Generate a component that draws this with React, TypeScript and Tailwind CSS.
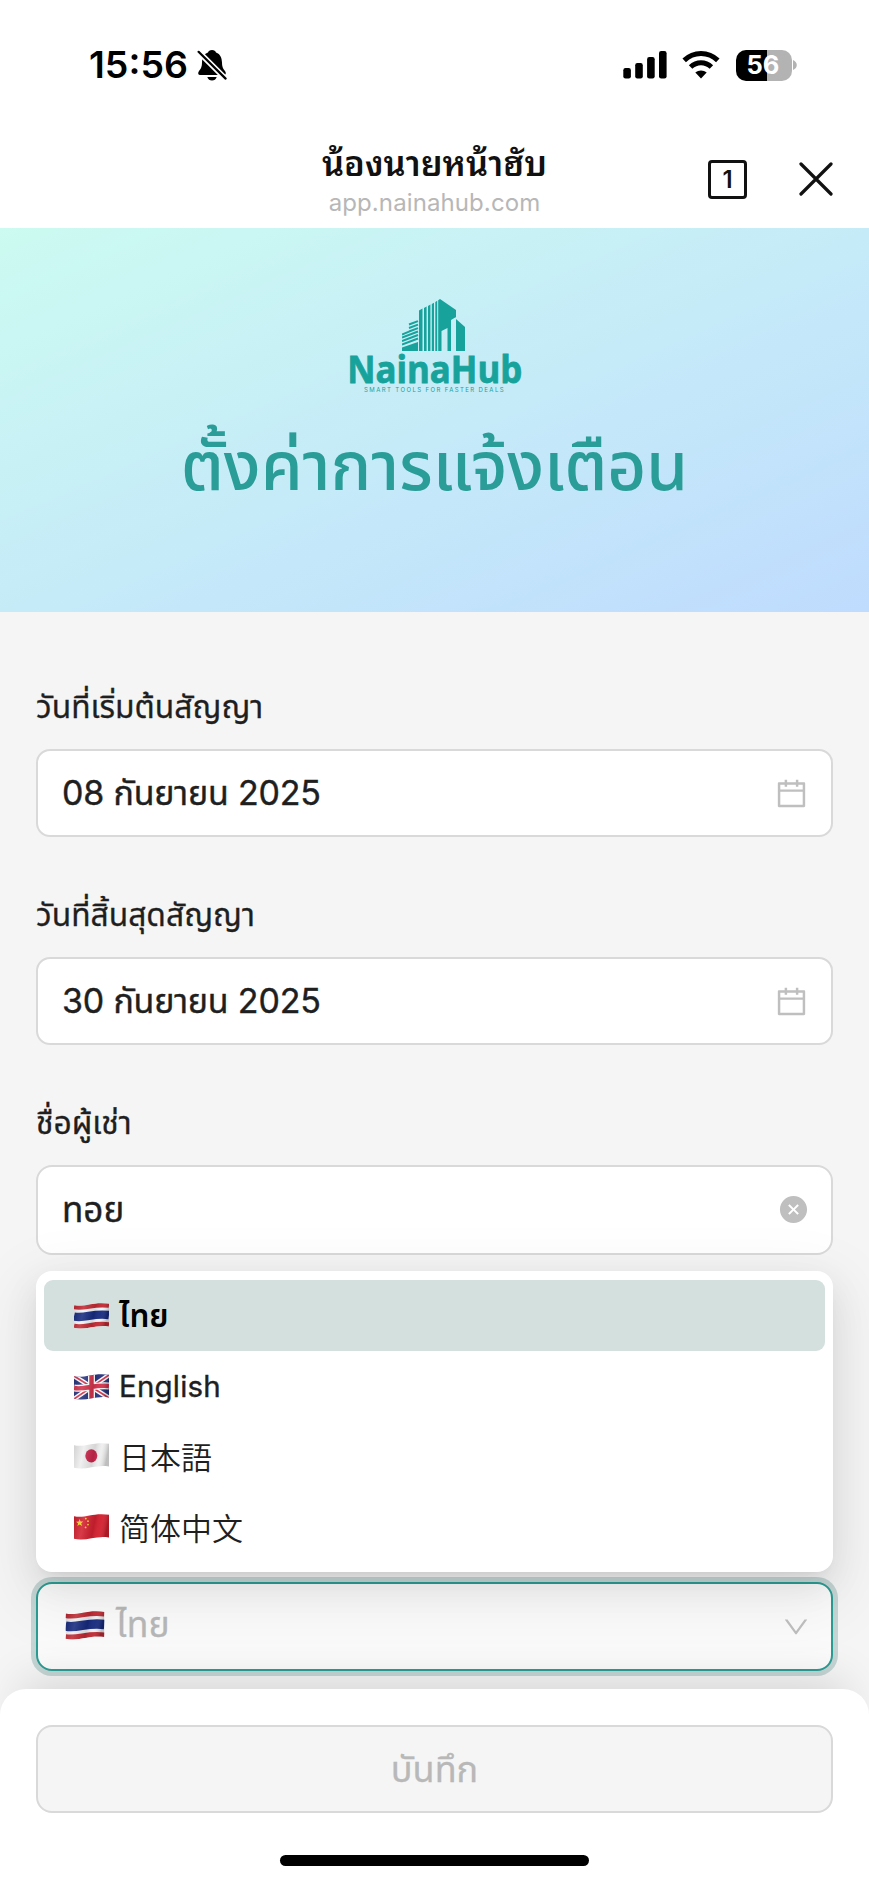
import { useId } from "react";
import type { ReactNode } from "react";
import { AiFillCloseCircle, AiOutlineCalendar, AiOutlineDown } from "react-icons/ai";

type Country = "th" | "gb" | "jp" | "cn";

function Flag({ country, className }: { country: Country; className: string }) {
  const id = useId();
  return (
    <svg viewBox="0 0 35 26" className={className} aria-hidden="true">
      <defs>
        <clipPath id={id + "c"}>
          <path d="M0 2.2 C11 4.6 19 -1.6 35 0.8 L35 23.4 C21 21.2 13 27.4 0 24.8 Z" />
        </clipPath>
        <linearGradient id={id + "g"} x1="0" x2="1" y1="0" y2="0.15">
          <stop offset="0" stopColor="#000" stopOpacity="0.12" />
          <stop offset="0.3" stopColor="#fff" stopOpacity="0.12" />
          <stop offset="0.62" stopColor="#000" stopOpacity="0.1" />
          <stop offset="0.8" stopColor="#fff" stopOpacity="0.04" />
          <stop offset="1" stopColor="#000" stopOpacity="0.2" />
        </linearGradient>
      </defs>
      <g clipPath={`url(#${id}c)`}>
        {country === "th" && (
          <g fill="none">
            <rect width="35" height="26" fill="#f1f2f5" />
            <path d="M0 4 C11 6.4 19 0.2 35 2.6" stroke="#c22a34" strokeWidth="4.6" />
            <path d="M0 13.5 C11 15.9 19 9.7 35 12.1" stroke="#172a80" strokeWidth="8.4" />
            <path d="M0 23 C11 25.4 19 19.2 35 21.6" stroke="#c22a34" strokeWidth="4.6" />
          </g>
        )}
        {country === "gb" && (
          <g fill="none">
            <rect width="35" height="26" fill="#28357f" />
            <path d="M0 2 L35 24 M0 25 L35 1" stroke="#fff" strokeWidth="4.6" />
            <path d="M0 2 L35 24 M0 25 L35 1" stroke="#d2334c" strokeWidth="1.7" />
            <path d="M17.5 0 V26 M0 14 C11 16 19 10.5 35 12" stroke="#fff" strokeWidth="7" />
            <path d="M17.5 0 V26 M0 14 C11 16 19 10.5 35 12" stroke="#d2334c" strokeWidth="4.4" />
          </g>
        )}
        {country === "jp" && (
          <g>
            <rect width="35" height="26" fill="#eeeeee" />
            <ellipse cx="17.3" cy="12.8" rx="6" ry="6.6" fill="#c8264b" />
          </g>
        )}
        {country === "cn" && (
          <g fill="#f8d030">
            <rect width="35" height="26" fill="#d3202f" />
            <path d="M5.6 5 l1 2.5 2.6 0 -2 1.8 .8 2.7 -2.4 -1.5 -2.3 1.6 .8 -2.7 -2.1 -1.6 2.7 -.2z" />
            <circle cx="11.8" cy="4.6" r=".9" />
            <circle cx="14" cy="7.2" r=".9" />
            <circle cx="14" cy="10.6" r=".9" />
            <circle cx="11.6" cy="13.4" r=".9" />
          </g>
        )}
        <rect width="35" height="26" fill={`url(#${id}g)`} />
      </g>
    </svg>
  );
}

function BellSlash() {
  return (
    <svg viewBox="0 0 30 32" className="ml-[10px] h-8 w-[30px]" aria-hidden="true">
      <path d="M15 1 C12.8 1 11.4 2.2 11 3.4 C6.5 5 5.2 9 5 13.5 C4.9 18.5 3.6 20 2 22 C.6 24 1 26 3.2 26 H26.8 C29 26 29.4 24 28 22 C26.4 20 25.1 18.5 25 13.5 C24.8 9 23.5 5 19 3.4 C18.6 2.2 17.2 1 15 1 Z M10.3 28 H19.7 C19 30.4 17.2 31.6 15 31.6 C12.8 31.6 11 30.4 10.3 28 Z" />
      <path d="M1 2.2 L29 30.2" stroke="#fff" strokeWidth="5.6" />
      <path d="M1.6 2.8 L28.6 29.6" stroke="#000" strokeWidth="2.2" strokeLinecap="round" />
    </svg>
  );
}

function StatusBar() {
  return (
    <div className="flex h-[130px] items-start justify-between pt-[46px] pr-[72px] pl-[89px]">
      <div className="flex h-[38px] items-center">
        <span className="w-[98px] pb-px text-[37.5px] leading-[38px] font-semibold whitespace-nowrap">15:56</span>
        <BellSlash />
      </div>
      <div className="flex h-[38px] items-center">
        <svg viewBox="0 0 44 28" className="h-7 w-11" aria-hidden="true">
          <rect x="0.3" y="17" width="7.6" height="10.4" rx="2.2" />
          <rect x="12.2" y="12" width="7.6" height="15.4" rx="2.2" />
          <rect x="24.1" y="6" width="7.6" height="21.4" rx="2.2" />
          <rect x="36" y="0" width="7.6" height="27.4" rx="2.2" />
        </svg>
        <svg viewBox="0 0 38 28" className="ml-[15px] h-7 w-[38px]" fill="none" stroke="#000" aria-hidden="true">
          <path d="M2.2 9.4 C11.6 0.2 26.4 0.2 35.8 9.4" strokeWidth="5" />
          <path d="M8.6 16 C14.6 10.3 23.4 10.3 29.4 16" strokeWidth="5" />
          <path d="M19 27.6 L13.3 21.6 C16.5 18.8 21.5 18.8 24.7 21.6 Z" fill="#000" stroke="none" />
        </svg>
        <div className="ml-[16px] flex h-[31px] w-[56px] items-center justify-center rounded-[10px] bg-linear-to-r from-black from-56% to-[#b3b3b3] to-56% pr-[2px] text-[25.5px] leading-none font-bold text-white">56</div>
        <svg viewBox="0 0 4 10" className="ml-[1px] h-[10px] w-1" aria-hidden="true">
          <path d="M0 0 C5 2 5 8 0 10 Z" fill="#b3b3b3" />
        </svg>
      </div>
    </div>
  );
}

function BrowserBar() {
  return (
    <div className="grid h-[98px] grid-cols-[1fr_240px_1fr]">
      <div />
      <div className="flex flex-col items-center">
        <h1 className="mt-[9px] h-[50px] font-[Inter,'Noto_Sans_Thai_Looped',Loma,Garuda,Waree,sans-serif] text-[34.5px] leading-[50px] font-semibold whitespace-nowrap text-[#111]">น้องนายหน้าฮับ</h1>
        <p className="h-7 text-[24px] leading-7 tracking-[0.1px] text-[#b7b7b7]">app.nainahub.com</p>
      </div>
      <div className="flex items-start justify-end pt-[30px] pr-9">
        <div className="flex size-[39px] items-center justify-center rounded-[4px] border-3 border-[#111] text-[24px] leading-none font-semibold text-[#111]">1</div>
        <svg viewBox="0 0 34 34" className="mt-[2px] ml-[52px] size-[34px]" stroke="#111" strokeWidth="3.2" strokeLinecap="round" aria-hidden="true">
          <path d="M2 2 L32 32 M32 2 L2 32" />
        </svg>
      </div>
    </div>
  );
}

function Logo() {
  return (
    <div className="flex flex-col items-center text-[#17a29b]">
      <svg viewBox="0 0 63 53" className="mr-[2px] h-[53px] w-[63px]" fill="currentColor" aria-hidden="true">
        <path d="M38 0 L54 11 V20 L63 28 V52 H54 V18 L49 21 V52 H45.500 V29 L39.500 32 V52 H37 Z" />
        <path d="M17 11.500 L20.500 9.600 V52 H17 Z M22 9 L24.600 7.600 V52 H22 Z M26 7 L28.400 5.600 V52 H26 Z M29.800 5 L32 3.800 V52 H29.800 Z M33.300 3 L35.200 1.800 V52 H33.300 Z M36.200 1.200 L38 0 V52 H36.200 Z" />
        <path d="M0 48.500 L16 43 V52 H0 Z" />
        <path
          d="M0 45.500 L16 39.500 M0 42 L16 36 M0 38.500 L16 32.500 M7 32.500 L16 29.200 M7 29 L16 25.700 M7 25.500 L16 22.100 M0 35.500 L7 32.700"
          stroke="currentColor"
          strokeWidth="1.900"
        />
      </svg>
      <div className="mt-[-3px] h-[37px] scale-x-[0.915] text-center font-['Open_Sans'] text-[38px] leading-[38px] font-bold whitespace-nowrap [-webkit-text-stroke:0.8px_currentColor]">NainaHub</div>
      <div className="h-[7px] text-[6px] leading-[7px] tracking-[1.4px] whitespace-nowrap">SMART TOOLS FOR FASTER DEALS</div>
    </div>
  );
}

function Label({ children }: { children: ReactNode }) {
  return <div className="h-[50px] text-[31.8px] leading-[48px] whitespace-nowrap [-webkit-text-stroke:0.3px_currentColor]">{children}</div>;
}

function DateField({ label, value }: { label: string; value: string }) {
  return (
    <div className="mb-[54px]">
      <Label>{label}</Label>
      <div className="mt-[16px] flex h-[88px] items-center justify-between rounded-[14px] border-2 border-[#d9d9d9] bg-white pr-[22px] pl-6">
        <span className="pb-px text-[34px] tracking-[-0.2px] whitespace-nowrap [-webkit-text-stroke:0.4px_currentColor]">{value}</span>
        <AiOutlineCalendar className="size-[35px] text-[#bfbfbf]" />
      </div>
    </div>
  );
}

const languages: { country: Country; name: string; style: string }[] = [
  { country: "th", name: "ไทย", style: "bg-[#d4e0de] text-[31.5px] font-semibold text-black" },
  { country: "gb", name: "English", style: "text-[29.5px] tracking-[0.2px] [-webkit-text-stroke:0.4px_currentColor]" },
  { country: "jp", name: "日本語", style: "pb-[3px] font-['Noto_Sans_CJK_JP'] text-[31px] font-[350]" },
  { country: "cn", name: "简体中文", style: "pb-[3px] font-['Noto_Sans_CJK_SC'] text-[31px] font-[350]" },
];

function LanguageSelect() {
  return (
    <div className="relative mt-[327px]">
      <div className="flex h-[89px] items-center justify-between rounded-[16px] border-2 border-[#2a9d94] bg-[#fbfbfb] pr-5 pl-[27px] shadow-[0_0_0_5px_#c4d5d4]">
        <div className="flex items-center pb-[3px]">
          <Flag country="th" className="h-[29px] w-10" />
          <span className="ml-[11px] text-[35.5px] leading-[50px] text-[#b8b8b8] [-webkit-text-stroke:0.3px_currentColor]">ไทย</span>
        </div>
        <AiOutlineDown className="size-[30px] text-[#bfbfbf]" />
      </div>
      <div className="absolute inset-x-0 bottom-[99px] flex h-[301px] flex-col rounded-[16px] bg-white p-2 pt-[9px] shadow-[0_13px_35px_0_rgba(0,0,0,0.08),0_7px_13px_-9px_rgba(0,0,0,0.12),0_20px_62px_18px_rgba(0,0,0,0.06)]">
        {languages.map((l) => (
          <div key={l.country} className={"flex h-[71px] shrink-0 items-center rounded-[9px] pl-[30px] " + l.style}>
            <Flag country={l.country} className="h-[26px] w-[35px]" />
            <span className="ml-[10px]">{l.name}</span>
          </div>
        ))}
      </div>
    </div>
  );
}

export default function App() {
  return (
    <div className="flex h-[1884px] w-[869px] flex-col overflow-hidden bg-white font-[Inter,'Noto_Sans_Thai',sans-serif] text-black">
      <StatusBar />
      <BrowserBar />
      <div className="flex h-[384px] shrink-0 flex-col items-center bg-linear-to-br from-[#ccfbf1] to-[#bfdbfe] pt-[71px]">
        <Logo />
        <h2 className="mt-[23px] h-[100px] text-[67.3px] leading-[100px] font-medium whitespace-nowrap text-[#2a9d98]">ตั้งค่าการแจ้งเตือน</h2>
      </div>
      <main className="flex h-[1107px] shrink-0 flex-col bg-[#f5f5f5] px-9 pt-[71px] text-[#1f1f1f]">
        <DateField label="วันที่เริ่มต้นสัญญา" value="08 กันยายน 2025" />
        <DateField label="วันที่สิ้นสุดสัญญา" value="30 กันยายน 2025" />
        <div>
          <Label>ชื่อผู้เช่า</Label>
          <div className="mt-[16px] flex h-[90px] items-center justify-between rounded-[16px] border-2 border-[#d9d9d9] bg-white pr-[22px] pb-[2px] pl-6">
            <span className="text-[35px] [-webkit-text-stroke:0.4px_currentColor]">ทอย</span>
            <AiFillCloseCircle className="size-[31px] text-[#bfbfbf]" />
          </div>
        </div>
        <LanguageSelect />
      </main>
      <footer className="relative -mt-[30px] flex h-[195px] shrink-0 flex-col items-center rounded-t-[26px] bg-white px-9 pt-9 shadow-[0_-30px_46px_-22px_rgba(0,0,0,0.13)]">
        <button className="h-[88px] w-full rounded-[16px] border-2 border-[#d9d9d9] bg-[#f5f5f5] pb-px text-[36px] text-[#b8b8b8] [-webkit-text-stroke:0.3px_currentColor]">บันทึก</button>
        <div className="mt-[42px] h-[11px] w-[309px] rounded-full bg-black" />
      </footer>
    </div>
  );
}
